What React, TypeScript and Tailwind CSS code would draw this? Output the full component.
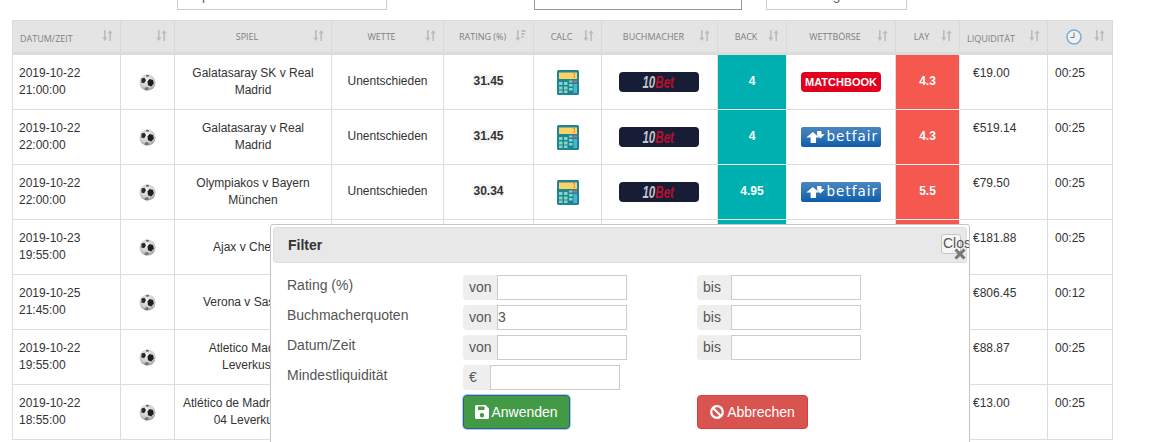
const rows = [
  { date: "2019-10-22", time: "21:00:00", game: "Galatasaray SK v Real Madrid", rating: "31.45", book: "matchbook", back: "4", lay: "4.3", liq: "€19.00", left: "00:25" },
  { date: "2019-10-22", time: "22:00:00", game: "Galatasaray v Real Madrid", rating: "31.45", book: "betfair", back: "4", lay: "4.3", liq: "€519.14", left: "00:25" },
  { date: "2019-10-22", time: "22:00:00", game: "Olympiakos v Bayern München", rating: "30.34", book: "betfair", back: "4.95", lay: "5.5", liq: "€79.50", left: "00:25" },
  { date: "2019-10-23", time: "19:55:00", game: "Ajax v Chelsea", rating: "30.12", book: "betfair", back: "4.5", lay: "5", liq: "€181.88", left: "00:25" },
  { date: "2019-10-25", time: "21:45:00", game: "Verona v Sassuolo", rating: "29.87", book: "betfair", back: "3.4", lay: "3.75", liq: "€806.45", left: "00:12" },
  { date: "2019-10-22", time: "19:55:00", game: "Atletico Madrid v Leverkusen", rating: "29.51", book: "betfair", back: "5", lay: "5.6", liq: "€88.87", left: "00:25" },
  { date: "2019-10-22", time: "18:55:00", game: "Atlético de Madrid v Bayer 04 Leverkusen", rating: "29.2", book: "matchbook", back: "5", lay: "5.6", liq: "€13.00", left: "00:25" },
];

const SortIcon = ({ active }: { active?: boolean }) => (
  <svg width="11" height="11" viewBox="0 0 11 11" className="mb-[2px] shrink-0" fill="#bcbcbc">
    <path d="M2 0h1.6v7.5H5.4L2.8 11 .2 7.5H2z" />
    {active ? (
      <path d="M6.5 0h4v2h-4zM6.5 3h3v2h-3zM6.5 6h2v2h-2z" />
    ) : (
      <path d="M7.4 11H9V3.5h1.8L8.2 0 5.6 3.5h1.8z" />
    )}
  </svg>
);

const ClockIcon = () => (
  <svg width="16" height="16" viewBox="0 0 16 16">
    <circle cx="8" cy="8" r="7" fill="#f2f2f2" stroke="#7ab0e0" strokeWidth="1.6" />
    <path d="M8 3.5V8.5H4.5" fill="none" stroke="#777" strokeWidth="1" />
  </svg>
);

const Ball = () => (
  <svg width="17" height="17" viewBox="0 0 17 17" className="mx-auto">
    <defs>
      <radialGradient id="ballShade" cx="0.45" cy="0.35" r="0.7">
        <stop offset="0" stopColor="#f4f4f4" />
        <stop offset="0.7" stopColor="#c8c8c8" />
        <stop offset="1" stopColor="#8d8d8d" />
      </radialGradient>
    </defs>
    <circle cx="8.5" cy="8.5" r="8" fill="url(#ballShade)" />
    <path d="M10.5 5l3.500 1 .8 3.500-2.600 3-3.200-1.200-.5-3.800z" fill="#1e1e1e" />
    <path d="M2.500 4.500l3-.8 1.500 2.600-1.800 3L2.400 8.600z" fill="#2a2a2a" />
    <path d="M6 13.500l3-.4 1 2.400-2.500 1-2-1z" fill="#777" />
    <path d="M7 .7l3 .2-.5 1.800-2.200 0z" fill="#666" />
  </svg>
);

const Calculator = () => (
  <svg width="22" height="25" viewBox="0 0 22 25" className="mx-auto">
    <rect width="22" height="25" rx="1.500" fill="#1f8493" />
    <rect x="2" y="2.500" width="18" height="6.500" fill="#fbd264" />
    <path d="M16 3l1.500 2.500L16 8h2V3z" fill="#ee8a3c" />
    <rect x="12" y="10.500" width="3.500" height="2" fill="#7fd0c4" />
    <rect x="16.500" y="10.500" width="3.500" height="2" fill="#d9647e" />
    <rect x="16.500" y="14" width="3.500" height="9" fill="#45b7d1" />
    <path d="M2 12h3.500v3H2zM7 12h3.500v3H7zM2 16.500h3.500v3H2zM7 16.500h3.500v3H7zM12 14h3.500v2.500H12zM12 18h3.500v2.500H12zM2 20.500h3.500v2.500H2zM7 20.500h3.500v2.500H7z" fill="#84d6c6" />
  </svg>
);

const TenBet = () => (
  <div className="mx-auto flex h-[20px] w-[80px] items-center justify-center rounded-[4px] bg-[#181d36] font-['Liberation_Sans',sans-serif] text-[17px] font-bold italic leading-none">
    <span className="flex scale-x-[0.68]">
      <span className="text-[#c4c4ca]">10</span>
      <span className="text-[#b5102f]">Bet</span>
    </span>
  </div>
);

const Matchbook = () => (
  <div className="mx-auto flex h-[20px] w-[80px] items-center justify-center rounded-[4px] bg-[#e2001f] font-['Liberation_Sans',sans-serif] text-[11px] font-bold leading-none text-white">
    MATCHBOOK
  </div>
);

const Betfair = () => (
  <div className="mx-auto flex h-[20px] w-[80px] items-center justify-end gap-[2px] rounded-[2px] bg-gradient-to-b from-[#4a86c0] via-[#2f74b5] to-[#0b5ca9] pr-[3px] font-['DejaVu_Sans',sans-serif] text-[13.5px] leading-none tracking-[1px] text-white">
    <svg width="19" height="13" viewBox="0 0 17 12" fill="#fff">
      <path d="M0 6l6-5 6 5H9v5H4V6z" />
      <path d="M10 0h4v3h3l-4 4-3-3z" />
    </svg>
    <span>betfair</span>
  </div>
);

const headers: { label?: string; clock?: boolean; align: string; active?: boolean }[] = [
  { label: "DATUM/ZEIT", align: "left" },
  { align: "left" },
  { label: "SPIEL", align: "center" },
  { label: "WETTE", align: "center" },
  { label: "RATING (%)", align: "center", active: true },
  { label: "CALC", align: "center" },
  { label: "BUCHMACHER", align: "center" },
  { label: "BACK", align: "center" },
  { label: "WETTBÖRSE", align: "center" },
  { label: "LAY", align: "center" },
  { label: "LIQUIDITÄT", align: "left" },
  { clock: true, align: "center" },
];

const widths = ["w-[108px]", "w-[54px]", "w-[157px]", "w-[112px]", "w-[90px]", "w-[68px]", "w-[116px]", "w-[69px]", "w-[109px]", "w-[64px]", "w-[88px]", "w-[65px]"];

const InputGroup = ({ addon, value, addonWidth, inputWidth }: { addon: string; value?: string; addonWidth: string; inputWidth: string }) => (
  <div className="flex h-[25px] text-[14px] text-[#555]">
    <span className={`flex items-center rounded-l-[4px] bg-[#eee] pl-[6px] ${addonWidth}`}>{addon}</span>
    <div className={`flex items-center border border-[#ccc] ${inputWidth}`}>{value}</div>
  </div>
);

const filterRows = ["Rating (%)", "Buchmacherquoten", "Datum/Zeit"];

export default function App() {
  return (
    <div className="relative h-[442px] w-[1151px] overflow-hidden bg-white font-['Liberation_Sans',Arial,sans-serif] text-[12px] text-[#333]">
      {/* Cut off filter boxes on top */}
      <div className="mb-[10px] flex h-[10px] items-end overflow-hidden text-[13px] text-[#555]">
        <div className="ml-[177px] flex h-[30px] w-[210px] shrink-0 items-end border border-[#ccc] pb-[4px] pl-[24px]">p</div>
        <div className="ml-[147px] h-[30px] w-[208px] shrink-0 border border-[#999]" />
        <div className="ml-[24px] flex h-[30px] w-[141px] shrink-0 items-end justify-center border border-[#ccc] pb-[4px]">g</div>
      </div>

      <table className="ml-[12px] w-[1100px] table-fixed border-collapse">
        <colgroup>
          {widths.map((w, i) => (
            <col key={i} className={w} />
          ))}
        </colgroup>
        <thead>
          <tr className="h-[33px] bg-[#e4e4e4] font-['Open_Sans',sans-serif] text-[9px] font-normal text-[#808080]">
            {headers.map((h, i) => (
              <th key={i} className="border border-b-[3px] border-[#dadada] border-b-[#dcdcdc] px-[7px] font-normal">
                <div className="flex items-center">
                  <span className={h.align === "center" ? "flex-1 pr-[1px] text-center" : "flex-1 pt-[4px] text-left"}>
                    {h.clock ? <span className="inline-block align-middle"><ClockIcon /></span> : h.label}
                  </span>
                  <SortIcon active={h.active} />
                </div>
              </th>
            ))}
          </tr>
        </thead>
        <tbody>
          {rows.map((row, i) => (
            <tr key={row.game} className={i === 0 ? "h-[56px]" : "h-[55px]"}>
              <td className="border border-[#ddd] px-[6px] leading-[17px]">
                {row.date}
                <br />
                {row.time}
              </td>
              <td className="border border-[#ddd]">
                <Ball />
              </td>
              <td className="border border-[#ddd] px-[7px] text-center leading-[17px]">{row.game}</td>
              <td className="border border-[#ddd] pb-[3px] text-center">Unentschieden</td>
              <td className="border border-[#ddd] pb-[3px] text-center font-bold">
                <span className="rounded-[3px] bg-[#f5f5f5]">{row.rating}</span>
              </td>
              <td className="border border-[#ddd]">
                <Calculator />
              </td>
              <td className="border border-[#ddd] pr-[2px]">
                <TenBet />
              </td>
              <td className="border border-[#eee] bg-[#00b0b0] pb-[3px] text-center font-bold text-white">{row.back}</td>
              <td className="border border-[#ddd]">{row.book === "matchbook" ? <Matchbook /> : <Betfair />}</td>
              <td className="border border-[#eee] bg-[#f4584f] pb-[3px] text-center font-bold text-white">{row.lay}</td>
              <td className="border border-[#ddd] pl-[13px] pt-[9px] align-top">{row.liq}</td>
              <td className="border border-[#ddd] pl-[7px] pt-[9px] align-top">{row.left}</td>
            </tr>
          ))}
        </tbody>
      </table>

      {/* Filter dialog */}
      <div className="absolute left-[270px] top-[224px] h-[240px] w-[700px] overflow-hidden rounded-t-[3px] border border-[#c5c5c5] bg-white p-[2px] text-[14px] text-[#555]">
        <div className="flex h-[36px] items-center justify-between rounded-[3px] border border-[#ddd] bg-[#e8e8e8] pl-[14px] pr-[5px]">
          <span className="text-[14px] font-bold text-[#333]">Filter</span>
          <div className="relative mb-[3px] flex h-[20px] w-[20px] items-center whitespace-nowrap rounded-[3px] border border-[#c5c5c5] bg-[#f6f6f6] pl-[1px] text-[14px] text-[#555]">
            Close
            <svg width="12" height="12" viewBox="0 0 12 12" className="absolute -bottom-[7px] -right-[6px]" fill="none" stroke="#777" strokeWidth="3">
              <path d="M1.500 1.500l9 9M10.500 1.500l-9 9" />
            </svg>
          </div>
        </div>

        <div className="mt-[12px] flex flex-col gap-[5px] pl-[14px]">
          {filterRows.map((label, i) => (
            <div key={label} className="flex">
              <div className="w-[176px] leading-[20px]">{label}</div>
              <InputGroup addon="von" value={i === 1 ? "3" : ""} addonWidth="w-[34px]" inputWidth="w-[130px]" />
              <div className="ml-[70px]">
                <InputGroup addon="bis" addonWidth="w-[34px]" inputWidth="w-[130px]" />
              </div>
            </div>
          ))}
          <div className="flex">
            <div className="w-[176px] leading-[20px]">Mindestliquidität</div>
            <InputGroup addon="€" addonWidth="w-[27px]" inputWidth="w-[130px]" />
          </div>
          <div className="flex pl-[176px]">
            <button className="flex h-[34px] w-[107px] items-center justify-center gap-[2px] rounded-[4px] border border-[#2e5f8a] bg-[#439a46] text-white shadow-[0_0_0_1px_#a8cdf2]">
              <svg width="14" height="14" viewBox="0 0 14 14" fill="#fff">
                <path d="M1.500 0H10.500L14 3.500V12.500A1.500 1.500 0 0 1 12.500 14H1.500A1.500 1.500 0 0 1 0 12.500V1.500A1.500 1.500 0 0 1 1.500 0zM3 1.500V5H9.500V1.500zM7 8a2.200 2.200 0 1 0 0 4.400A2.200 2.200 0 0 0 7 8z" fillRule="evenodd" />
              </svg>
              Anwenden
            </button>
            <button className="ml-[127px] flex h-[34px] w-[111px] items-center justify-center gap-[3px] rounded-[4px] border border-[#d43f3a] bg-[#d9534f] text-white">
              <svg width="14" height="14" viewBox="0 0 14 14" fill="none" stroke="#fff" strokeWidth="2.200">
                <circle cx="7" cy="7" r="5.800" />
                <path d="M3 3l8 8" />
              </svg>
              Abbrechen
            </button>
          </div>
        </div>
      </div>
    </div>
  );
}
